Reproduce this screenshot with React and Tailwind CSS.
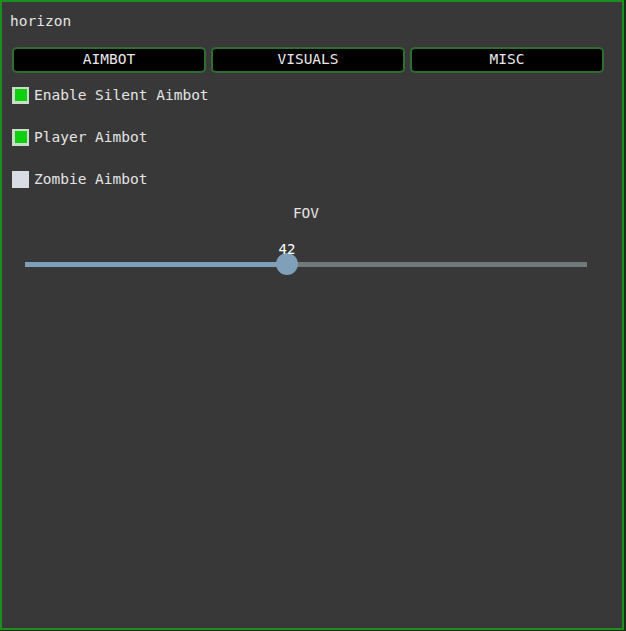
import React, { useState } from "react";

const tabs = ["AIMBOT", "VISUALS", "MISC"];

function Check({ label, checked, onToggle }) {
  return (
    <div className="flex items-center gap-[5px] h-[17px] cursor-pointer" onClick={onToggle}>
      <div
        className={
          "w-[17px] h-[17px] flex items-center justify-center " +
          (checked ? "bg-[#c9dcc9]" : "bg-[#d9dce2]")
        }
      >
        {checked && <div className="w-[12px] h-[12px] bg-[#0fd00f]" />}
      </div>
      <span className="text-[#e4e4e4]">{label}</span>
    </div>
  );
}

export default function App() {
  const [tab, setTab] = useState("AIMBOT");
  const [silent, setSilent] = useState(true);
  const [player, setPlayer] = useState(true);
  const [zombie, setZombie] = useState(false);
  const [fov] = useState(42);
  const pct = 262 / 562;

  return (
    <div className="w-[626px] h-[631px] bg-[#163016]">
      <div
        className="w-[624px] h-[630px] bg-[#383838] border-2 border-[#1f8c1f] text-[14.5px] leading-none"
        style={{ fontFamily: '"DejaVu Sans Mono", "Liberation Mono", monospace' }}
      >
        <div className="pl-[8px] pt-[12px] text-[#e4e4e4]">horizon</div>

        <div className="flex gap-[5px] px-[10px] mt-[18px]">
          {tabs.map((t) => (
            <button
              key={t}
              onClick={() => setTab(t)}
              className="w-[194px] h-[26px] bg-black border-2 border-[#2e6e2e] rounded-[5px] text-[#e8e8e8] text-[14.5px]"
            >
              {t}
            </button>
          ))}
        </div>

        <div className="flex flex-col gap-[25px] pl-[10px] mt-[14px]">
          <Check label="Enable Silent Aimbot" checked={silent} onToggle={() => setSilent(!silent)} />
          <Check label="Player Aimbot" checked={player} onToggle={() => setPlayer(!player)} />
          <Check label="Zombie Aimbot" checked={zombie} onToggle={() => setZombie(!zombie)} />
        </div>

        <div className="ml-[23px] mr-[35px]">
          <div className="text-center text-[#e4e4e4] mt-[18px]">FOV</div>

          <div className="mt-[33px] relative h-[22px] flex items-center">
            <div className="w-full h-[5px] bg-[#707a7a] flex">
              <div className="h-full bg-[#7fa0b8]" style={{ width: `${pct * 100}%` }} />
            </div>
            <div
              className="absolute top-0 w-[22px] h-[22px] rounded-full bg-[#7fa0b8] -ml-[11px]"
              style={{ left: `${pct * 100}%` }}
            >
              <div className="absolute -top-[11px] left-1/2 -translate-x-1/2 text-white text-[14px]">
                {fov}
              </div>
            </div>
          </div>
        </div>
      </div>
    </div>
  );
}
